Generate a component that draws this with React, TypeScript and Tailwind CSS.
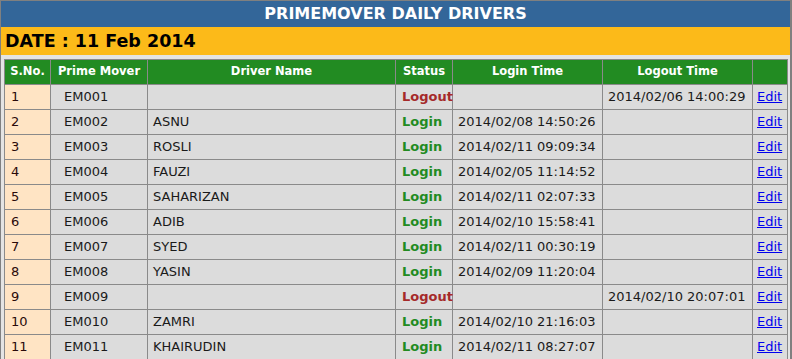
import React from 'react';

type Row = {
  no: number;
  mover: string;
  driver: string;
  status: 'Login' | 'Logout';
  login: string;
  logout: string;
};

const rows: Row[] = [
  { no: 1, mover: 'EM001', driver: '', status: 'Logout', login: '', logout: '2014/02/06 14:00:29' },
  { no: 2, mover: 'EM002', driver: 'ASNU', status: 'Login', login: '2014/02/08 14:50:26', logout: '' },
  { no: 3, mover: 'EM003', driver: 'ROSLI', status: 'Login', login: '2014/02/11 09:09:34', logout: '' },
  { no: 4, mover: 'EM004', driver: 'FAUZI', status: 'Login', login: '2014/02/05 11:14:52', logout: '' },
  { no: 5, mover: 'EM005', driver: 'SAHARIZAN', status: 'Login', login: '2014/02/11 02:07:33', logout: '' },
  { no: 6, mover: 'EM006', driver: 'ADIB', status: 'Login', login: '2014/02/10 15:58:41', logout: '' },
  { no: 7, mover: 'EM007', driver: 'SYED', status: 'Login', login: '2014/02/11 00:30:19', logout: '' },
  { no: 8, mover: 'EM008', driver: 'YASIN', status: 'Login', login: '2014/02/09 11:20:04', logout: '' },
  { no: 9, mover: 'EM009', driver: '', status: 'Logout', login: '', logout: '2014/02/10 20:07:01' },
  { no: 10, mover: 'EM010', driver: 'ZAMRI', status: 'Login', login: '2014/02/10 21:16:03', logout: '' },
  { no: 11, mover: 'EM011', driver: 'KHAIRUDIN', status: 'Login', login: '2014/02/11 08:27:07', logout: '' },
];

const headers = ['S.No.', 'Prime Mover', 'Driver Name', 'Status', 'Login Time', 'Logout Time', ''];

const cell = 'h-6 flex items-center bg-[#dcdcdc] text-[13px] text-[#1a1a1a] whitespace-nowrap';

const App: React.FC = () => {
  return (
    <div className="w-[792px] border-t border-l border-r-2 border-[#808080] bg-[#e4e4e4] font-['DejaVu_Sans',sans-serif]">
      <div className="h-[26px] bg-[#336699] flex items-center justify-center text-white font-bold text-[16px]">
        PRIMEMOVER DAILY DRIVERS
      </div>
      <div className="h-7 bg-[#fcba19] flex items-center pl-1 text-black font-bold text-[17.5px]">
        DATE : 11 Feb 2014
      </div>
      <div className="pt-1 pl-[3px]">
        <div className="w-[784px] grid grid-cols-[45px_96px_247px_56px_149px_149px_34px] gap-px bg-[#8a8a8a] border border-[#8a8a8a]">
          {headers.map((h, i) => (
            <div key={i} className="h-6 flex items-center justify-center bg-[#228b22] text-white font-bold text-[11.5px]">
              {h}
            </div>
          ))}
          {rows.map((r) => (
            <React.Fragment key={r.no}>
              <div className={`${cell} bg-[#ffe4c4] pl-[6px] text-[#2a0a0a]`}>{r.no}</div>
              <div className={`${cell} pl-[13px]`}>{r.mover}</div>
              <div className={`${cell} pl-[5px]`}>{r.driver}</div>
              <div
                className={`${cell} pl-[6px] font-bold text-[11px] ${
                  r.status === 'Login' ? 'text-[#228b22]' : 'text-[#a52a2a]'
                }`}
              >
                {r.status}
              </div>
              <div className={`${cell} pl-[5px]`}>{r.login}</div>
              <div className={`${cell} pl-[5px]`}>{r.logout}</div>
              <div className={`${cell} pl-[4px]`}>
                <a href="#" className="text-[#0000ee] underline">
                  Edit
                </a>
              </div>
            </React.Fragment>
          ))}
        </div>
      </div>
    </div>
  );
};

export default App;
